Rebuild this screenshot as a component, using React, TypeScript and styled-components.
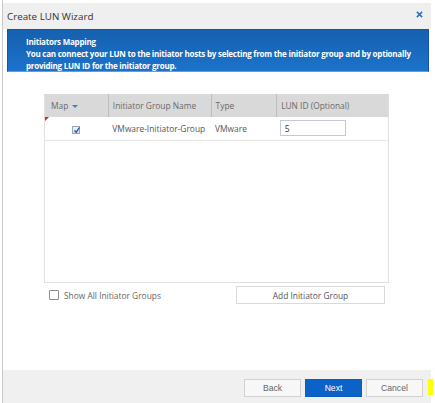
import styled, { createGlobalStyle } from 'styled-components'

const GlobalStyle = createGlobalStyle`
  html, body {
    margin: 0;
    padding: 0;
    background: #ffffff;
  }
  body {
    font-family: "Open Sans", "Liberation Sans", sans-serif;
    color: #333333;
  }
`

const Page = styled.div`
  position: relative;
  width: 435px;
  height: 403px;
  box-sizing: border-box;
  padding-left: 2px;
  display: flex;
  overflow: hidden;
  background: #ffffff;
`

const Dialog = styled.div`
  width: 429px;
  height: 403px;
  box-sizing: border-box;
  border-left: 1px solid #c9c9c9;
  padding-top: 3px;
  display: flex;
  flex-direction: column;
`

const TitleBar = styled.div`
  height: 26px;
  flex-shrink: 0;
  background: #efefef;
  display: flex;
  align-items: center;
  justify-content: space-between;
  padding: 0 8px 0 4px;
`

const Title = styled.div`
  font-size: 9.8px;
  color: #333333;
`

const CloseIcon = styled.svg`
  width: 7px;
  height: 7px;
  margin-top: -3px;
`

const Banner = styled.div`
  height: 43px;
  flex-shrink: 0;
  box-sizing: border-box;
  margin: 0 2px 0 4px;
  padding: 6px 4px 0 18px;
  background: linear-gradient(#1660b0, #1b73cb);
  border: 1px solid #1357a3;
  border-bottom: 1px solid #5da0e0;
  color: #ffffff;
  font-weight: 700;
  font-size: 8px;
  letter-spacing: -0.23px;
  line-height: 12px;
`

const Body = styled.div`
  flex: 1;
  padding: 22px 0 0 41px;
  display: flex;
  flex-direction: column;
`

const TableBox = styled.div`
  position: relative;
  width: 345px;
  height: 189px;
  box-sizing: border-box;
  border: 1px solid #e0e0e0;
  border-top: none;
`

const Grid = styled.table`
  width: 100%;
  border-collapse: collapse;
  font-size: 8.4px;
  color: #555555;
`

const HeadCell = styled.th<{ $w: number }>`
  width: ${(p) => p.$w}px;
  height: 23px;
  padding: 0 0 0 4px;
  background: #d9d9d9;
  text-align: left;
  font-weight: 400;
  color: #6a6a6a;
  border-left: 1px solid #bdbdbd;
  &:first-child {
    border-left: none;
    padding-left: 6px;
  }
`

const SortArrow = styled.span`
  display: inline-block;
  margin-left: 4px;
  width: 0;
  height: 0;
  border-left: 3px solid transparent;
  border-right: 3px solid transparent;
  border-top: 3px solid #3b7fd0;
  vertical-align: middle;
`

const Row = styled.tr`
  height: 23px;
  border-bottom: 1px solid #e6e6e6;
`

const Cell = styled.td<{ $pad?: number }>`
  padding: 0 0 0 ${(p) => p.$pad ?? 4}px;
  text-align: left;
  color: #555555;
  white-space: nowrap;
`

const CheckedBox = styled.span`
  display: inline-block;
  width: 8px;
  height: 8px;
  box-sizing: border-box;
  border: 1px solid #9aa6b8;
  background: linear-gradient(#eef1f6, #d7dde8);
  vertical-align: middle;
  position: relative;
  svg {
    position: absolute;
    left: 0;
    top: -1px;
  }
`

const RedMark = styled.span`
  position: absolute;
  left: 0;
  top: 23px;
  width: 0;
  height: 0;
  border-top: 4px solid #e0201a;
  border-right: 4px solid transparent;
`

const LunInput = styled.input`
  width: 66px;
  height: 16px;
  box-sizing: border-box;
  border: 1px solid #c6c8d8;
  font-family: inherit;
  font-size: 8.4px;
  color: #333333;
  padding: 0 4px;
  margin-left: -1px;
  outline: none;
`

const OptionsRow = styled.div`
  width: 345px;
  margin-top: 3px;
  display: flex;
  align-items: center;
  justify-content: space-between;
`

const ShowAll = styled.label`
  display: flex;
  align-items: center;
  gap: 5px;
  padding-left: 5px;
  font-size: 8.4px;
  color: #666666;
`

const EmptyBox = styled.span`
  width: 8px;
  height: 8px;
  border: 1px solid #8a8a8a;
  border-radius: 1px;
  background: #ffffff;
`

const AddButton = styled.button`
  width: 149px;
  height: 18px;
  margin-right: 4px;
  border: 1px solid #dadada;
  background: #ffffff;
  font-family: inherit;
  font-size: 8.4px;
  color: #555555;
  padding: 0;
`

const Footer = styled.div`
  height: 33px;
  flex-shrink: 0;
  box-sizing: border-box;
  background: #f0f0f0;
  display: flex;
  align-items: center;
  justify-content: flex-end;
  gap: 4px;
  padding: 3px 8px 0 0;
`

const FooterButton = styled.button<{ $primary?: boolean }>`
  width: 57px;
  height: 18px;
  padding: 0;
  font-family: "Liberation Sans", "Open Sans", sans-serif;
  font-size: 8.6px;
  border: 1px solid ${(p) => (p.$primary ? '#0b5fc0' : '#d2d2d2')};
  background: ${(p) => (p.$primary ? '#0b63c8' : '#f7f7f7')};
  color: ${(p) => (p.$primary ? '#ffffff' : '#666666')};
`

const Highlight = styled.div`
  position: absolute;
  left: 428px;
  top: 379px;
  width: 5px;
  height: 16px;
  background: #ffff00;
`

function App() {
  return (
    <Page>
      <GlobalStyle />
      <Dialog>
        <TitleBar>
          <Title>Create LUN Wizard</Title>
          <CloseIcon viewBox="0 0 8 8">
            <path d="M1 1 L7 7 M7 1 L1 7" stroke="#2f6fbf" strokeWidth="1.8" />
          </CloseIcon>
        </TitleBar>
        <Banner>
          <div>Initiators Mapping</div>
          <div>
            You can connect your LUN to the initiator hosts by selecting from the initiator group and by optionally
            providing LUN ID for the initiator group.
          </div>
        </Banner>
        <Body>
          <TableBox>
            <Grid>
              <thead>
                <tr>
                  <HeadCell $w={63}>
                    Map
                    <SortArrow />
                  </HeadCell>
                  <HeadCell $w={99}>Initiator Group Name</HeadCell>
                  <HeadCell $w={67}>Type</HeadCell>
                  <HeadCell $w={116}>LUN ID (Optional)</HeadCell>
                </tr>
              </thead>
              <tbody>
                <Row>
                  <Cell $pad={27}>
                    <CheckedBox>
                      <svg width="8" height="8" viewBox="0 0 8 8">
                        <path d="M1.5 4.5 L3.2 6.2 L6.5 1.5" stroke="#2a4fa8" strokeWidth="1.3" fill="none" />
                      </svg>
                    </CheckedBox>
                  </Cell>
                  <Cell>VMware-Initiator-Group</Cell>
                  <Cell>VMware</Cell>
                  <Cell>
                    <LunInput defaultValue="5" />
                  </Cell>
                </Row>
              </tbody>
            </Grid>
            <RedMark />
          </TableBox>
          <OptionsRow>
            <ShowAll>
              <EmptyBox />
              Show All Initiator Groups
            </ShowAll>
            <AddButton type="button">Add Initiator Group</AddButton>
          </OptionsRow>
        </Body>
        <Footer>
          <FooterButton type="button">Back</FooterButton>
          <FooterButton type="button" $primary>
            Next
          </FooterButton>
          <FooterButton type="button">Cancel</FooterButton>
        </Footer>
      </Dialog>
      <Highlight />
    </Page>
  )
}

export default App
